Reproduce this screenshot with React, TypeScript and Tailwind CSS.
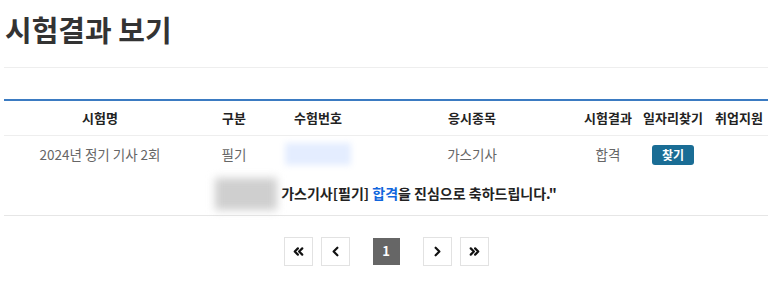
import { ChevronLeft, ChevronRight, ChevronsLeft, ChevronsRight } from "lucide-react";

const font = { fontFamily: '"Noto Sans CJK KR", "Noto Sans", sans-serif' };

const headers = ["시험명", "구분", "수험번호", "응시종목", "시험결과", "일자리찾기", "취업지원"];

export default function App() {
  return (
    <div className="w-[773px] h-[281px] bg-white px-[4px] overflow-hidden" style={font}>
      {/* title */}
      <h2 className="pt-[9px] pl-[1px] text-[29px] font-bold leading-[40px] text-[#333]">
        시험결과 보기
      </h2>
      <div className="mt-[18px] w-[764px] border-t border-[#eee]" />

      {/* result table */}
      <table className="mt-[31px] w-[764px] table-fixed border-collapse border-t-2 border-[#3b7bc2] text-[13.5px]">
        <colgroup>
          <col className="w-[192px]" />
          <col className="w-[76px]" />
          <col className="w-[92px]" />
          <col className="w-[216px]" />
          <col className="w-[56px]" />
          <col className="w-[74px]" />
          <col className="w-[58px]" />
        </colgroup>
        <thead>
          <tr className="h-[35px] border-b border-[#eee]">
            {headers.map((h) => (
              <th key={h} className="p-0 text-center text-[13px] font-bold text-[#222] whitespace-nowrap">
                {h}
              </th>
            ))}
          </tr>
        </thead>
        <tbody>
          <tr className="h-[38px] text-[#666]">
            <td className="text-center">2024년 정기 기사 2회</td>
            <td className="text-center">필기</td>
            <td className="text-center">
              <div className="mx-auto h-[22px] w-[66px] bg-[#e4edff] blur-[3px]" />
            </td>
            <td className="text-center">가스기사</td>
            <td className="text-center">합격</td>
            <td className="text-center">
              <button className="h-[20px] w-[42px] rounded-[3px] bg-[#1a6d95] text-[12px] font-bold leading-[20px] text-white">
                찾기
              </button>
            </td>
            <td />
          </tr>
          <tr className="h-[42px] border-b border-[#e6e6e6]">
            <td colSpan={7} className="p-0">
              <div className="flex items-center justify-center gap-[4px] font-bold text-[14px] text-[#222]">
                <div className="h-[32px] w-[62px] bg-[#cfcfcf] blur-[4px]" />
                <p>
                  가스기사[필기] <span className="text-[#1166dd]">합격</span>을 진심으로 축하드립니다."
                </p>
              </div>
            </td>
          </tr>
        </tbody>
      </table>

      {/* pagination */}
      <nav className="mt-[21px] flex w-[764px] items-center justify-center">
        <div className="flex items-center gap-[8px]">
          <PageBtn><ChevronsLeft size={15} strokeWidth={3.5} /></PageBtn>
          <PageBtn><ChevronLeft size={15} strokeWidth={3.5} /></PageBtn>
        </div>
        <span className="mx-[23px] flex h-[27px] w-[27px] items-center justify-center bg-[#666] text-[13px] font-bold text-white">
          1
        </span>
        <div className="flex items-center gap-[8px]">
          <PageBtn><ChevronRight size={15} strokeWidth={3.5} /></PageBtn>
          <PageBtn><ChevronsRight size={15} strokeWidth={3.5} /></PageBtn>
        </div>
      </nav>
    </div>
  );
}

function PageBtn({ children }: { children: React.ReactNode }) {
  return (
    <button className="flex h-[29px] w-[29px] items-center justify-center border border-[#e2e2e2] bg-white text-[#111]">
      {children}
    </button>
  );
}
